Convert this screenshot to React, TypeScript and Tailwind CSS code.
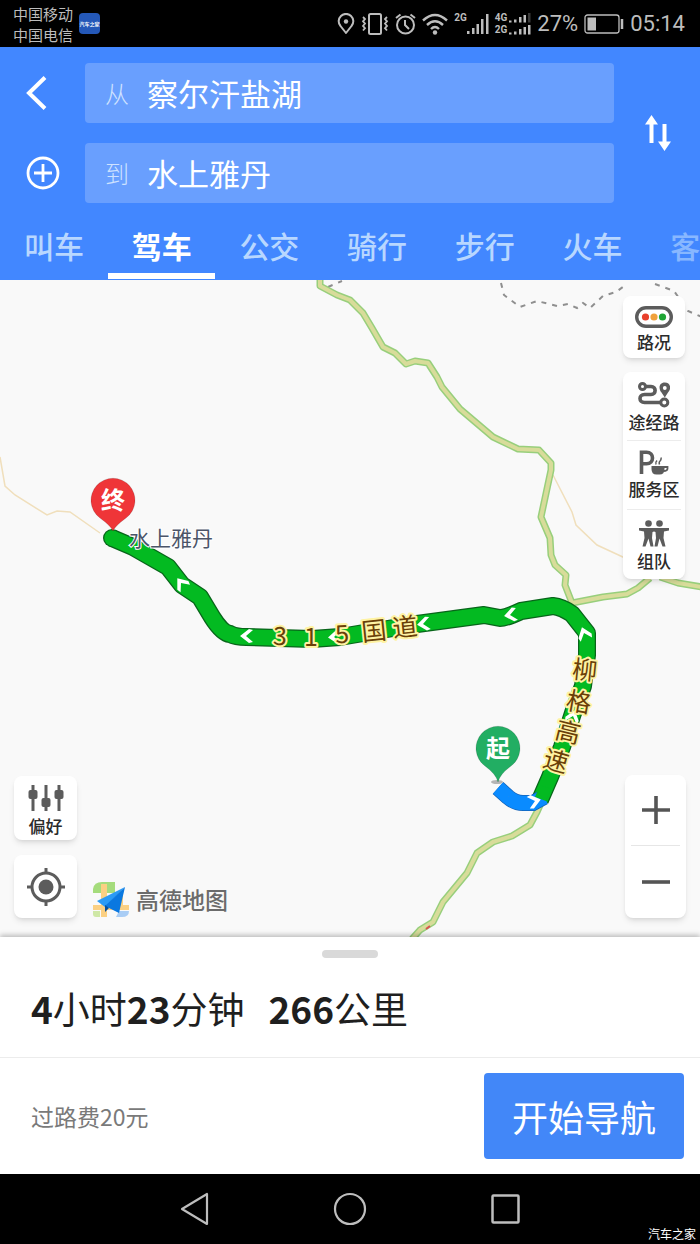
import { useState } from 'react';
import type { ReactNode } from 'react';
import clsx from 'clsx';

const tabs = ['叫车', '驾车', '公交', '骑行', '步行', '火车', '客'];

const routePoints =
  'M112 538 L133 547 L168 567 L182 585 L200 597 L212 617 Q222 633 230 634 Q236 637 246 637 L312 639 L340 637 L417 624 L484 615 L500 618 Q506 618 521 611 L553 606 Q562 607 572 614 L587 633 L587 655 L583 686 L573 713 L562 747 L550 777 L540 800';

const roads = [
  'M320 280 L320 286 L337 295 L350 300 L363 313 L372 328 L383 347 L395 353 L406 364 L415 361 L428 363 L437 377 L442 387 L460 409 L493 437 L518 449 L539 450 L551 463 L551 470 L541 517 L550 538 L551 555 L555 565 L566 575 L565 585 L572 603',
  'M572 603 L603 597 L627 594 L638 588 L650 578',
  'M660 577 L678 583 L702 587',
  'M541 803 L537 812 L530 825 L512 836 L493 842 L477 853 L467 873 L443 902 L433 922 L420 930 L412 939',
];

const arrows = [
  { x: 181, y: 583, angle: 52 },
  { x: 246, y: 636, angle: 0 },
  { x: 334, y: 637, angle: -4 },
  { x: 423, y: 624, angle: -8 },
  { x: 510, y: 615, angle: -10 },
  { x: 584, y: 633, angle: 70 },
  { x: 573, y: 716, angle: 108 },
  { x: 535, y: 801, angle: 165 },
];

const roadLabels = [
  { text: '3', x: 280, y: 636, angle: 2 },
  { text: '1', x: 311, y: 637, angle: 0 },
  { text: '5', x: 342, y: 634, angle: -4 },
  { text: '国', x: 374, y: 631, angle: -6 },
  { text: '道', x: 405, y: 627, angle: -6 },
  { text: '柳', x: 585, y: 670, angle: 6 },
  { text: '格', x: 579, y: 702, angle: 10 },
  { text: '高', x: 568, y: 732, angle: 14 },
  { text: '速', x: 556, y: 761, angle: 16 },
];

function StatusBar() {
  return (
    <div className="h-[47px] bg-black text-[#bdbdbd] flex items-center justify-between pl-[13px] pr-[15px]">
      <div className="flex items-center gap-1.5">
        <div className="text-[15px] leading-[21px] whitespace-nowrap">
          <p>中国移动</p>
          <p>中国电信</p>
        </div>
        <div className="w-[21px] h-[21px] rounded bg-[#2458b8] flex items-center justify-center">
          <span className="text-[5px] leading-none font-bold text-white whitespace-nowrap">汽车之家</span>
        </div>
      </div>

      <div className="flex items-center gap-1.5">
        <svg width="18" height="22" viewBox="0 0 17 22" fill="none" stroke="currentColor" strokeWidth="2">
          <path d="M8.500 20 L3 13 A7.300 7.300 0 1 1 14 13 Z" strokeLinejoin="round" />
          <circle cx="8.500" cy="8.500" r="2.200" fill="currentColor" stroke="none" />
        </svg>
        <svg width="28" height="22" viewBox="0 0 28 22" fill="none" stroke="currentColor" strokeWidth="2">
          <rect x="8" y="1" width="12" height="20" rx="1.500" />
          <path d="M2 4 l2 2 l-2 2.300 l2 2.300 l-2 2.300 l2 2.300 l-2 2.300 M26 4 l-2 2 l2 2.300 l-2 2.300 l2 2.300 l-2 2.300 l2 2.300" strokeWidth="1.800" />
        </svg>
        <svg width="21" height="22" viewBox="0 0 21 22" fill="none" stroke="currentColor" strokeWidth="2">
          <circle cx="10.500" cy="12" r="8.500" />
          <path d="M10 7 V12 L14 16 M1 5 L5.500 1.500 M20 5 L15.500 1.500" />
        </svg>
        <svg width="26" height="22" viewBox="0 0 26 22" fill="none" stroke="currentColor" strokeWidth="2.400">
          <path d="M1 7.500 Q13 -3.500 25 7.500 M5 12 Q13 4.500 21 12 M9 16 Q13 12 17 16" />
          <circle cx="13" cy="19.500" r="2.200" fill="currentColor" stroke="none" />
        </svg>
        <div className="flex items-start font-[Roboto,sans-serif]">
          <span className="text-[10px] leading-[10px] font-bold">2G</span>
          <svg width="22" height="22" viewBox="0 0 22 22" fill="currentColor">
            <path d="M0 18h2.500v3H0z M5 15h2.500v6H5z M9.500 11h2.500v10H9.500z M14 6h2.500v15H14z M19 1h2.500v20H19z" />
          </svg>
        </div>
        <div className="flex flex-col gap-0.5 font-[Roboto,sans-serif]">
          <div className="flex items-center">
            <span className="text-[10px] leading-[10px] font-bold">4G</span>
            <svg width="24" height="10" viewBox="0 0 24 10" fill="currentColor">
              <path d="M2 7.500h2.500v2H2z M7 6.500h2.500v3H7z M12 4h2.500v5.500H12z M16.500 2h2.500v7.500H16.500z" />
              <path d="M21 0h2.500v9.500H21z" fill="#3a3a3a" />
            </svg>
          </div>
          <div className="flex items-center">
            <span className="text-[10px] leading-[10px] font-bold">2G</span>
            <svg width="24" height="10" viewBox="0 0 24 10" fill="currentColor">
              <path d="M2 7.500h2.500v2H2z M7 6.500h2.500v3H7z M12 4h2.500v5.500H12z M16.500 2h2.500v7.500H16.500z M21 0h2.500v9.500H21z" />
            </svg>
          </div>
        </div>
        <span className="font-[Roboto,sans-serif] text-[22px] leading-6">27%</span>
        <svg width="40" height="20" viewBox="0 0 40 20" fill="none" stroke="currentColor">
          <rect x="1" y="1" width="34" height="18" rx="2.500" strokeWidth="1.300" />
          <path d="M3.500 3.500h8.500v13H3.500z" fill="currentColor" stroke="none" />
          <path d="M38 5v10" strokeWidth="2.500" />
        </svg>
        <span className="font-[Roboto,sans-serif] text-[22px] leading-6">05:14</span>
      </div>
    </div>
  );
}

function RouteField({ id, label, value, onChange }: { id: string; label: string; value: string; onChange: (v: string) => void }) {
  return (
    <div className="h-[60px] bg-[#699ffe] rounded flex items-center pl-5">
      <label htmlFor={id} className="text-2xl font-light text-[#cfe2ff] mr-[18px]">
        {label}
      </label>
      <input
        id={id}
        type="text"
        value={value}
        onChange={(e) => onChange(e.target.value)}
        className="flex-1 min-w-0 bg-transparent text-white text-[31px] leading-10 outline-none"
      />
    </div>
  );
}

function RouteHeader() {
  const [from, setFrom] = useState('察尔汗盐湖');
  const [to, setTo] = useState('水上雅丹');
  const [active, setActive] = useState('驾车');

  const swap = () => {
    setFrom(to);
    setTo(from);
  };

  return (
    <header className="bg-[#4287ff] text-white">
      <div className="flex items-stretch pt-4">
        <div className="w-[85px] flex flex-col gap-5">
          <button aria-label="返回" className="h-[60px] flex items-center pl-[26px]">
            <svg width="21" height="34" viewBox="0 0 21 34" fill="none" stroke="currentColor" strokeWidth="4">
              <path d="M19 1.500 L3 17 L19 32.500" />
            </svg>
          </button>
          <button aria-label="添加途经点" className="h-[60px] flex items-center pl-[26px]">
            <svg width="34" height="34" viewBox="0 0 34 34" fill="none" stroke="currentColor" strokeWidth="2.800">
              <circle cx="17" cy="17" r="15" />
              <path d="M17 8v18 M8 17h18" />
            </svg>
          </button>
        </div>
        <div className="flex-1 flex flex-col gap-5">
          <RouteField id="from" label="从" value={from} onChange={setFrom} />
          <RouteField id="to" label="到" value={to} onChange={setTo} />
        </div>
        <button aria-label="交换起终点" onClick={swap} className="w-[86px] flex items-center justify-center pl-0.5">
          <svg width="28" height="36" viewBox="0 0 28 36" fill="currentColor">
            <path d="M7.500 0 L14 9.500 H9.500 V28 H5.500 V9.500 H1 Z" />
            <path d="M20.500 36 L27 26.500 H22.500 V9 H18.500 V26.500 H14 Z" />
          </svg>
        </button>
      </div>

      <nav className="flex h-[77px] overflow-hidden">
        {tabs.map((tab) => (
          <button
            key={tab}
            onClick={() => setActive(tab)}
            className={clsx(
              'w-2/13 shrink-0 flex flex-col items-start text-[30px] leading-10 pt-[22px]',
              tab === active ? 'font-bold text-white' : 'font-medium text-[#b8d7ff]',
              tab === '客' && 'opacity-60',
            )}
          >
            <span className="pl-6">{tab}</span>
            {tab === active && <span className="w-full h-1.5 mt-2 bg-white"></span>}
          </button>
        ))}
      </nav>
    </header>
  );
}

function Pin({ x, y, tip, color, text }: { x: number; y: number; tip: number; color: string; text: string }) {
  return (
    <g>
      <path
        d={`M${x} ${tip} Q${x - 2} ${y + 26} ${x - 13} ${y + 18} A22 22 0 1 1 ${x + 13} ${y + 18} Q${x + 2} ${y + 26} ${x} ${tip} Z`}
        fill={color}
        stroke="#00000022"
      />
      <text x={x} y={y + 9} textAnchor="middle" fontSize="24" fontWeight="700" fill="#fff">
        {text}
      </text>
    </g>
  );
}

function MapCanvas() {
  return (
    <svg
      className="absolute inset-0 w-full h-full"
      viewBox="0 280 700 657"
      preserveAspectRatio="xMidYMid slice"
      fill="none"
    >
      {/* borders and minor roads */}
      <path
        d="M501 283 L504 295 L520 307 L537 301 L557 306 L568 304 L577 308 L583 303 L590 308 L603 296 L616 292 L627 284 M655 284 L674 291 L688 311 L702 317 M328 287 L342 281"
        stroke="#8f8f8f"
        strokeWidth="2"
        strokeDasharray="5 6"
      />
      <path
        d="M0 457 L5 486 L15 495 L47 515 L57 511 L70 512 L100 533 M553 475 L572 512 L576 525 L597 545 L625 558"
        stroke="#f0dfbc"
        strokeWidth="1.500"
      />

      {roads.map((d) => (
        <path key={d} d={d} stroke="#98cf7c" strokeWidth="7" strokeLinejoin="round" />
      ))}
      {roads.map((d) => (
        <path key={d} d={d} stroke="#d8dc9a" strokeWidth="4" strokeLinejoin="round" />
      ))}
      <path d="M426 929 l4 -3" stroke="#d9534f" strokeWidth="2" />

      {/* driving route */}
      <path d={routePoints} stroke="#08651a" strokeWidth="18" strokeLinejoin="round" />
      <circle cx="112" cy="538" r="9" fill="#08651a" />
      <path d={routePoints} stroke="#03ba21" strokeWidth="15.500" strokeLinejoin="round" />
      <circle cx="112" cy="538" r="7.700" fill="#03ba21" />
      <path d="M498 788 L508 797 Q515 803 523 803 L533 803 L544 797" stroke="#1563b8" strokeWidth="16" />
      <path d="M498 788 L508 797 Q515 803 523 803 L533 803 L544 797" stroke="#0a8bff" strokeWidth="14.500" />
      <path d="M535 797 L540 785 L551 789 L546 801 Z" fill="#03ba21" />

      {arrows.map((a) => (
        <path
          key={`${a.x}-${a.y}`}
          d="M-6 0 L3 -7 L7 -6 L0 0 L7 6 L3 7 Z"
          fill="#fff"
          transform={`translate(${a.x} ${a.y}) rotate(${a.angle})`}
        />
      ))}

      <text x="129" y="546" fontSize="21" fill="#4b5468" stroke="#fff" strokeWidth="2" paintOrder="stroke">
        水上雅丹
      </text>
      {roadLabels.map((l) => (
        <text
          key={l.text}
          x={l.x}
          y={l.y + 9}
          textAnchor="middle"
          fontSize="25"
          fontWeight="400"
          fill="#6a3f08"
          stroke="#fff3a3"
          strokeWidth="4"
          strokeLinejoin="round"
          paintOrder="stroke"
          transform={`rotate(${l.angle} ${l.x} ${l.y})`}
        >
          {l.text}
        </text>
      ))}

      <ellipse cx="497" cy="782" rx="6" ry="2" fill="#b5b5b5" />
      <Pin x={113} y={500} tip={531} color="#ef3538" text="终" />
      <Pin x={498} y={748} tip={782} color="#22ae63" text="起" />
    </svg>
  );
}

function MapButton({ label, children }: { label: string; children: ReactNode }) {
  return (
    <button className="w-full flex flex-col items-center gap-0.5 text-[17px] leading-6 font-medium text-[#2b2b2b]">
      {children}
      <span>{label}</span>
    </button>
  );
}

function LayerControls() {
  return (
    <div className="absolute top-4 right-[15px] w-[62px] flex flex-col gap-3.5">
      <div className="bg-white rounded-lg shadow-md pt-2.5 pb-1">
        <MapButton label="路况">
          <svg width="38" height="22" viewBox="0 0 38 22">
            <rect x="1.700" y="1.700" width="34.600" height="18.600" rx="9.300" fill="#fff" stroke="#5c5c5c" strokeWidth="3.400" />
            <circle cx="10.500" cy="11" r="3.600" fill="#e8402c" />
            <circle cx="19" cy="11" r="3.600" fill="#f0a13c" />
            <circle cx="27.500" cy="11" r="3.600" fill="#1fa534" />
          </svg>
        </MapButton>
      </div>

      <div className="bg-white rounded-lg shadow-md px-1 divide-y divide-[#ececec]">
        <div className="h-[69px] pt-2.5">
          <MapButton label="途经路">
            <svg width="32" height="26" viewBox="0 0 32 26" fill="none" stroke="#5c5c5c" strokeWidth="3">
              <circle cx="4.500" cy="4.500" r="3" />
              <path d="M8 4.500 H13 C18.500 4.500 18.500 12.500 13 12.500 H6.500 C0.500 12.500 0.500 20.500 6.500 20.500 H22.500" strokeWidth="3.600" />
              <circle cx="26.300" cy="20.500" r="3.500" />
              <path d="M26.800 0.500 C20.500 0.500 20.500 7.500 23.500 10.500 L26.800 15.500 L30 10.500 C33.500 7.500 33 0.500 26.800 0.500 Z" fill="#5c5c5c" stroke="none" />
              <circle cx="26.800" cy="6" r="1.900" fill="#fff" stroke="none" />
            </svg>
          </MapButton>
        </div>
        <div className="h-[69px] pt-2">
          <MapButton label="服务区">
            <svg width="30" height="26" viewBox="0 0 30 26" fill="none" stroke="#5c5c5c">
              <path d="M2.500 25 V3.300 H7.500 C15.500 3.300 15.500 14.800 7.500 14.800 H2.500" strokeWidth="3.600" />
              <path d="M12.500 17 H25.500 V20 Q25.500 25.500 20.500 25.500 H17.500 Q12.500 25.500 12.500 20 Z" fill="#5c5c5c" stroke="none" />
              <path d="M25 18 H28.500 V19.500 Q28.500 22 24.500 22" strokeWidth="1.800" />
              <path d="M17 15.500 q-1 -2 1 -4 M20.500 15.500 q-1 -2.500 1 -4 q1 -1.500 0.500 -3" strokeWidth="1.500" />
            </svg>
          </MapButton>
        </div>
        <div className="h-[69px] pt-2.5">
          <MapButton label="组队">
            <svg width="30" height="27" viewBox="0 0 30 27" fill="#5c5c5c">
              <circle cx="9.500" cy="3.500" r="3.300" />
              <circle cx="20.500" cy="3.500" r="3.300" />
              <path d="M0 8 H30 V10.500 L25 11.500 L24.500 18 L26.500 26.500 H23.500 L20.500 18.500 L18.500 26.500 H15.500 L17 18 L16.500 12 L15 11.500 L13.500 12 L13 18 L14.500 26.500 H11.500 L9.500 18.500 L6.500 26.500 H3.500 L5.500 18 L5 11.500 L0 10.500 Z" />
            </svg>
          </MapButton>
        </div>
      </div>
    </div>
  );
}

function PreferenceControls() {
  return (
    <div className="absolute left-3.5 bottom-[19px] flex items-end gap-4">
      <div className="w-[63px] flex flex-col gap-[15px]">
        <div className="h-16 bg-white rounded-lg shadow-md pt-2">
          <MapButton label="偏好">
            <svg width="36" height="28" viewBox="0 0 36 28" fill="#5c5c5c">
              <path d="M3.500 1h3v26h-3z M16.500 1h3v26h-3z M29.500 1h3v26h-3z" />
              <rect x="0.500" y="6" width="9" height="9" rx="2" />
              <rect x="13.500" y="14" width="9" height="9" rx="2" />
              <rect x="26.500" y="6" width="9" height="9" rx="2" />
            </svg>
          </MapButton>
        </div>
        <button aria-label="定位" className="h-[63px] bg-white rounded-lg shadow-md flex items-center justify-center">
          <svg width="38" height="38" viewBox="0 0 38 38" fill="none" stroke="#5c5c5c" strokeWidth="3">
            <circle cx="19" cy="19" r="14" />
            <circle cx="19" cy="19" r="7.500" fill="#5c5c5c" stroke="none" />
            <path d="M19 0v6 M19 32v6 M0 19h6 M32 19h6" />
          </svg>
        </button>
      </div>
      <div className="flex items-center gap-1.5">
        <svg width="37" height="37" viewBox="0 0 37 37">
          <path d="M0 12 V8 Q1 1 9 1 H22 V12 Z" fill="#a5dc7c" />
          <path d="M8 3 h6 v33 h-6 z M0 24 H36 V29 H0 Z M24 10 h6 v19 h-6 z" fill="#fbd083" />
          <path d="M0 30 h7 v6 h-4 q-3 0 -3 -3z" fill="#cfe8a6" />
          <path d="M26 30 h10 q0 6 -7 6 h-6z" fill="#a9cdf5" />
          <path d="M4 20 L32 6 L12 26 Z" fill="#2b9bf5" />
          <path d="M32 6 L26 32 L12 25 Z" fill="#0a78e0" />
          <path d="M12 24 L16 27 L12 31 Z" fill="#07509c" />
        </svg>
        <span className="text-[23px] leading-[37px] font-medium text-[#6b6b6b]">高德地图</span>
      </div>
    </div>
  );
}

function ZoomControls() {
  return (
    <div className="absolute right-3.5 bottom-[19px] w-[61px] px-1.5 bg-white rounded-lg shadow-md divide-y divide-[#e6e6e6]">
      <button aria-label="放大" className="w-full h-[71px] flex items-center justify-center">
        <svg width="28" height="28" viewBox="0 0 28 28" stroke="#555" strokeWidth="3.600">
          <path d="M14 0v28 M0 14h28" />
        </svg>
      </button>
      <button aria-label="缩小" className="w-full h-[72px] flex items-center justify-center">
        <svg width="28" height="28" viewBox="0 0 28 28" stroke="#555" strokeWidth="3.600">
          <path d="M0 14h28" />
        </svg>
      </button>
    </div>
  );
}

function RouteSheet() {
  return (
    <section className="relative bg-white shadow-[0_-2px_5px_rgba(0,0,0,0.25)]">
      <div className="pt-[13px] flex justify-center">
        <div className="w-14 h-2 rounded-full bg-[#d9d9d9]"></div>
      </div>
      <h1 className="flex gap-6 px-[31px] pt-[26px] pb-[25px] text-[37px] leading-[48px] font-normal text-[#1f1f1f] whitespace-nowrap">
        <span>
          <b>4</b>小时<b>23</b>分钟
        </span>
        <span>
          <b>266</b>公里
        </span>
      </h1>
      <div className="flex items-center justify-between border-t border-[#ececec] pl-[31px] pr-4 py-[15px]">
        <p className="text-[23px] leading-8 text-[#7a7a7a]">过路费20元</p>
        <button className="w-[200px] h-[86px] rounded bg-[#4287f8] text-white text-4xl">开始导航</button>
      </div>
    </section>
  );
}

function SystemNav() {
  return (
    <footer className="relative h-[70px] bg-black text-[#bdbdbd] flex items-center justify-center gap-[122px]">
      <button aria-label="返回键">
        <svg width="34" height="34" viewBox="0 0 34 34" fill="none" stroke="currentColor" strokeWidth="2.200" strokeLinejoin="round">
          <path d="M30 2 V32 L5 17 Z" />
        </svg>
      </button>
      <button aria-label="主屏幕">
        <svg width="34" height="34" viewBox="0 0 34 34" fill="none" stroke="currentColor" strokeWidth="2.200">
          <circle cx="17" cy="17" r="15" />
        </svg>
      </button>
      <button aria-label="最近任务">
        <svg width="34" height="34" viewBox="0 0 34 34" fill="none" stroke="currentColor" strokeWidth="2.500">
          <rect x="3.500" y="3.500" width="26" height="27" rx="1" />
        </svg>
      </button>
      <span className="absolute right-1 bottom-0.5 text-xs text-white">汽车之家</span>
    </footer>
  );
}

export default function App() {
  return (
    <div className="min-h-screen flex flex-col overflow-hidden bg-[#f9f9f9] font-['Noto_Sans_CJK_SC',sans-serif]">
      <StatusBar />
      <RouteHeader />
      <main className="relative flex-1 min-h-[480px] overflow-hidden">
        <MapCanvas />
        <LayerControls />
        <PreferenceControls />
        <ZoomControls />
      </main>
      <RouteSheet />
      <SystemNav />
    </div>
  );
}
